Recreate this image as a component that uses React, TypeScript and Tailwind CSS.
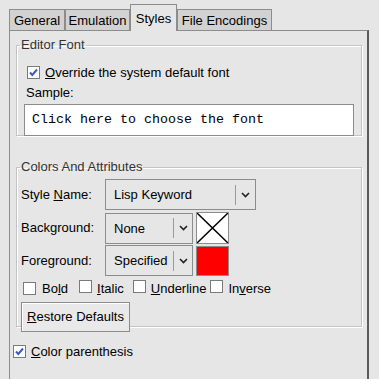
import React from "react";

const font = { fontFamily: '"Liberation Sans", Arial, sans-serif' };

function Check({ checked }: { checked?: boolean }) {
  return (
    <span className="inline-flex h-[13px] w-[13px] shrink-0 items-center justify-center border border-[#7a7a7a] bg-white">
      {checked && (
        <svg width="11" height="11" viewBox="0 0 11 11">
          <path d="M2 5.5 L4.3 8 L9 2.5" fill="none" stroke="#3c5cc4" strokeWidth="2" />
        </svg>
      )}
    </span>
  );
}

function Combo({ text, width, sep }: { text: string; width: number; sep: number }) {
  return (
    <div
      className="flex h-[31px] items-center border border-[#8c8c8c] bg-[#e6e6e6]"
      style={{ width }}
    >
      <span className="flex-1 pl-[8px] pt-[1px] text-[13px] text-black">{text}</span>
      <span className="h-[20px] w-px bg-[#9a9a9a]" />
      <span className="flex items-center justify-center" style={{ width: sep }}>
        <svg width="9" height="6" viewBox="0 0 9 6">
          <path d="M1 1 L4.5 4.5 L8 1" fill="none" stroke="#222" strokeWidth="1.6" />
        </svg>
      </span>
    </div>
  );
}

function Tab({ label, active, w }: { label: string; active?: boolean; w: number }) {
  return (
    <div
      className={
        active
          ? "relative z-10 -mb-px flex h-[27px] items-center justify-center border border-b-0 border-[#8c8c8c] bg-[#e6e6e6] text-[13px] text-black"
          : "flex h-[21px] items-center justify-center border border-b-0 border-[#8c8c8c] bg-[#d2d2d2] text-[13px] text-black"
      }
      style={{ width: w }}
    >
      <span className={active ? "pt-[2px]" : "pt-[1px]"}>{label}</span>
    </div>
  );
}

export default function App() {
  return (
    <div className="h-[379px] w-[379px] overflow-hidden bg-[#e6e6e6]" style={font}>
      <div className="pl-[9px] pt-[4px]">
        <div className="flex items-end">
          <Tab label="General" w={56} />
          <Tab label="Emulation" w={65} />
          <Tab label="Styles" active w={47} />
          <Tab label="File Encodings" w={95} />
        </div>
        <div className="h-[360px] w-[360px] border-l border-t border-r-2 border-[#8c8c8c] border-r-[#5a5a5a] bg-[#e6e6e6] pl-[6px] pr-[5px] pt-[7px]">
          <fieldset className="m-0 h-[98px] border border-[#c4c4c4] px-[7px] pb-0 pt-0 shadow-[inset_1px_1px_0_#ffffff,1px_1px_0_#ffffff]">
            <legend className="ml-[-4px] px-[1px] text-[13px] leading-[14px] text-[#333]">Editor Font</legend>
            <div className="mt-[11px] flex items-center gap-[5px] pl-[3px]">
              <Check checked />
              <span className="text-[13px] text-black">
                <u>O</u>verride the system default font
              </span>
            </div>
            <div className="mt-[0px] pl-[2px] text-[13px] text-black">Sample:</div>
            <div
              className="mt-[2px] flex h-[32px] w-[330px] items-center border border-[#8c8c8c] bg-white pl-[7px] text-[13.33px] text-black"
              style={{ fontFamily: '"Liberation Mono", "Courier New", monospace' }}
            >
              Click here to choose the font
            </div>
          </fieldset>

          <fieldset className="m-0 mt-[24px] h-[167px] border border-[#c4c4c4] px-[4px] pb-0 pt-0 shadow-[inset_1px_1px_0_#ffffff,1px_1px_0_#ffffff]">
            <legend className="ml-[-1px] px-[1px] text-[13px] leading-[14px] text-[#333]">Colors And Attributes</legend>
            <div className="mt-[5px] flex items-center">
              <span className="w-[84px] text-[13px] text-black">
                Style <u>N</u>ame:
              </span>
              <Combo text="Lisp Keyword" width={151} sep={19} />
            </div>
            <div className="mt-[2px] flex items-center">
              <span className="w-[84px] text-[13px] text-black">Background:</span>
              <Combo text="None" width={88} sep={18} />
              <div className="ml-[3px] h-[32px] w-[33px] border border-[#8c8c8c] bg-white">
                <svg width="31" height="30" viewBox="0 0 31 30">
                  <path d="M0 0 L31 30 M31 0 L0 30" stroke="#000" strokeWidth="1.5" />
                </svg>
              </div>
            </div>
            <div className="mt-[1px] flex items-center">
              <span className="w-[84px] text-[13px] text-black">Foreground:</span>
              <Combo text="Specified" width={88} sep={18} />
              <div className="ml-[3px] h-[30px] w-[33px] border border-[#8c8c8c] bg-[#ff0000]" />
            </div>
            <div className="mt-[3px] flex items-center pl-[2px] text-[13px] text-black">
              <Check />
              <span className="ml-[6px]">
                Bo<u>l</u>d
              </span>
              <span className="ml-[11px]">
                <Check />
              </span>
              <span className="ml-[5px]">
                <u>I</u>talic
              </span>
              <span className="ml-[9px]">
                <Check />
              </span>
              <span className="ml-[5px]">
                <u>U</u>nderline
              </span>
              <span className="ml-[4px]">
                <Check />
              </span>
              <span className="ml-[5px]">
                In<u>v</u>erse
              </span>
            </div>
            <button className="mt-[3px] flex h-[30px] w-[109px] items-center justify-center border border-[#8c8c8c] bg-[#e9e9e9] text-[13px] text-black shadow-[inset_1px_1px_0_#ffffff]">
              <span>
                <u>R</u>estore Defaults
              </span>
            </button>
          </fieldset>

          <div className="ml-[-3px] mt-[15px] flex items-center gap-[5px] text-[13px] text-black">
            <Check checked />
            <span>
              <u>C</u>olor parenthesis
            </span>
          </div>
        </div>
      </div>
    </div>
  );
}
